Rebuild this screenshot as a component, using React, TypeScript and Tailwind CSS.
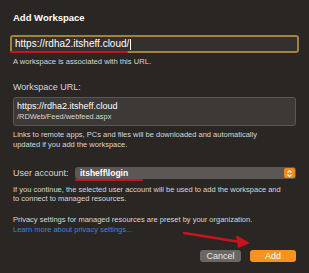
import React from "react";

export default function App() {
  return (
    <div
      className="relative w-[309px] h-[273px] overflow-hidden bg-[#2a2624] text-[#e6e4e2]"
      style={{ fontFamily: '"Liberation Sans", Arial, sans-serif' }}
    >
      <div className="flex flex-col px-[13px] pt-[12px]">
        <div className="text-[9.5px] font-bold text-white leading-[12px]">Add Workspace</div>

        <div className="mt-[11px] -mx-[3px] h-[18px] rounded-[3px] border-2 border-[#a4803d] bg-[#34302d] flex items-center px-[3px]">
          <span className="text-[10px] text-white leading-none">https://rdha2.itsheff.cloud/</span>
          <span className="w-px h-[11px] bg-white ml-px" />
        </div>

        <div className="mt-[4px] text-[7.6px] leading-[10px] text-[#d9d7d5]">
          A workspace is associated with this URL.
        </div>

        <div className="mt-[14px] text-[9px] leading-[12px] text-[#d9d7d5]">Workspace URL:</div>

        <div className="mt-[4px] h-[29px] rounded-[3px] border border-[#5a5654] bg-[#3c3937] flex flex-col justify-center px-[3px]">
          <div className="text-[9px] leading-[11px] text-white">https://rdha2.itsheff.cloud</div>
          <div className="text-[7.4px] leading-[10px] text-[#d9d7d5]">/RDWeb/Feed/webfeed.aspx</div>
        </div>

        <div className="mt-[4px] text-[7.5px] leading-[10px] text-[#d9d7d5]">
          Links to remote apps, PCs and files will be downloaded and automatically
          <br />
          updated if you add the workspace.
        </div>

        <div className="mt-[17px] h-[12px] flex items-center">
          <span className="text-[9px] leading-[12px] text-[#d9d7d5] w-[62px]">User account:</span>
          <div className="flex-1 h-[12px] rounded-[3px] bg-[#5b5755] flex items-center pl-[5px] pr-[1px]">
            <span className="text-[8.5px] font-bold text-white leading-none">itsheff\login</span>
            <span className="ml-auto w-[11px] h-[10px] rounded-[2px] bg-[#f08a1c] flex items-center justify-center">
              <svg width="7" height="9" viewBox="0 0 7 9">
                <path d="M1.5 3.5 L3.5 1.5 L5.5 3.5 M1.5 5.5 L3.5 7.5 L5.5 5.5" fill="none" stroke="white" strokeWidth="1.1" />
              </svg>
            </span>
          </div>
        </div>

        <div className="mt-[6px] text-[7.5px] leading-[9px] text-[#d9d7d5]">
          If you continue, the selected user account will be used to add the workspace and
          <br />
          to connect to managed resources.
        </div>

        <div className="mt-[12px] text-[7.5px] leading-[10px] text-[#d9d7d5]">
          Privacy settings for managed resources are preset by your organization.
          <br />
          <span className="text-[#3f83d6]">Learn more about privacy settings...</span>
        </div>

        <div className="mt-[15px] flex justify-end gap-[9px]">
          <button className="w-[41px] h-[12px] rounded-[3px] bg-[#6a6663] text-[9px] text-[#e8e6e4] leading-none flex items-center justify-center">
            Cancel
          </button>
          <button className="w-[46px] h-[12px] rounded-[3px] bg-[#f7921f] text-[9px] text-white leading-none flex items-center justify-center">
            Add
          </button>
        </div>
      </div>

      {/* red annotations */}
      <div className="absolute left-[10px] top-[51px] w-[118px] h-[2px] bg-[#c8141c] rounded-full" />
      <div className="absolute left-[75px] top-[179px] w-[68px] h-[2px] bg-[#c8141c] rounded-full" />
      <svg className="absolute left-0 top-0" width="309" height="273" viewBox="0 0 309 273">
        <path d="M184 233 L240 242" stroke="#c8141c" strokeWidth="2.4" strokeLinecap="round" fill="none" />
        <path d="M250 243 L236 235 L238 248 Z" fill="#c8141c" />
      </svg>
    </div>
  );
}
